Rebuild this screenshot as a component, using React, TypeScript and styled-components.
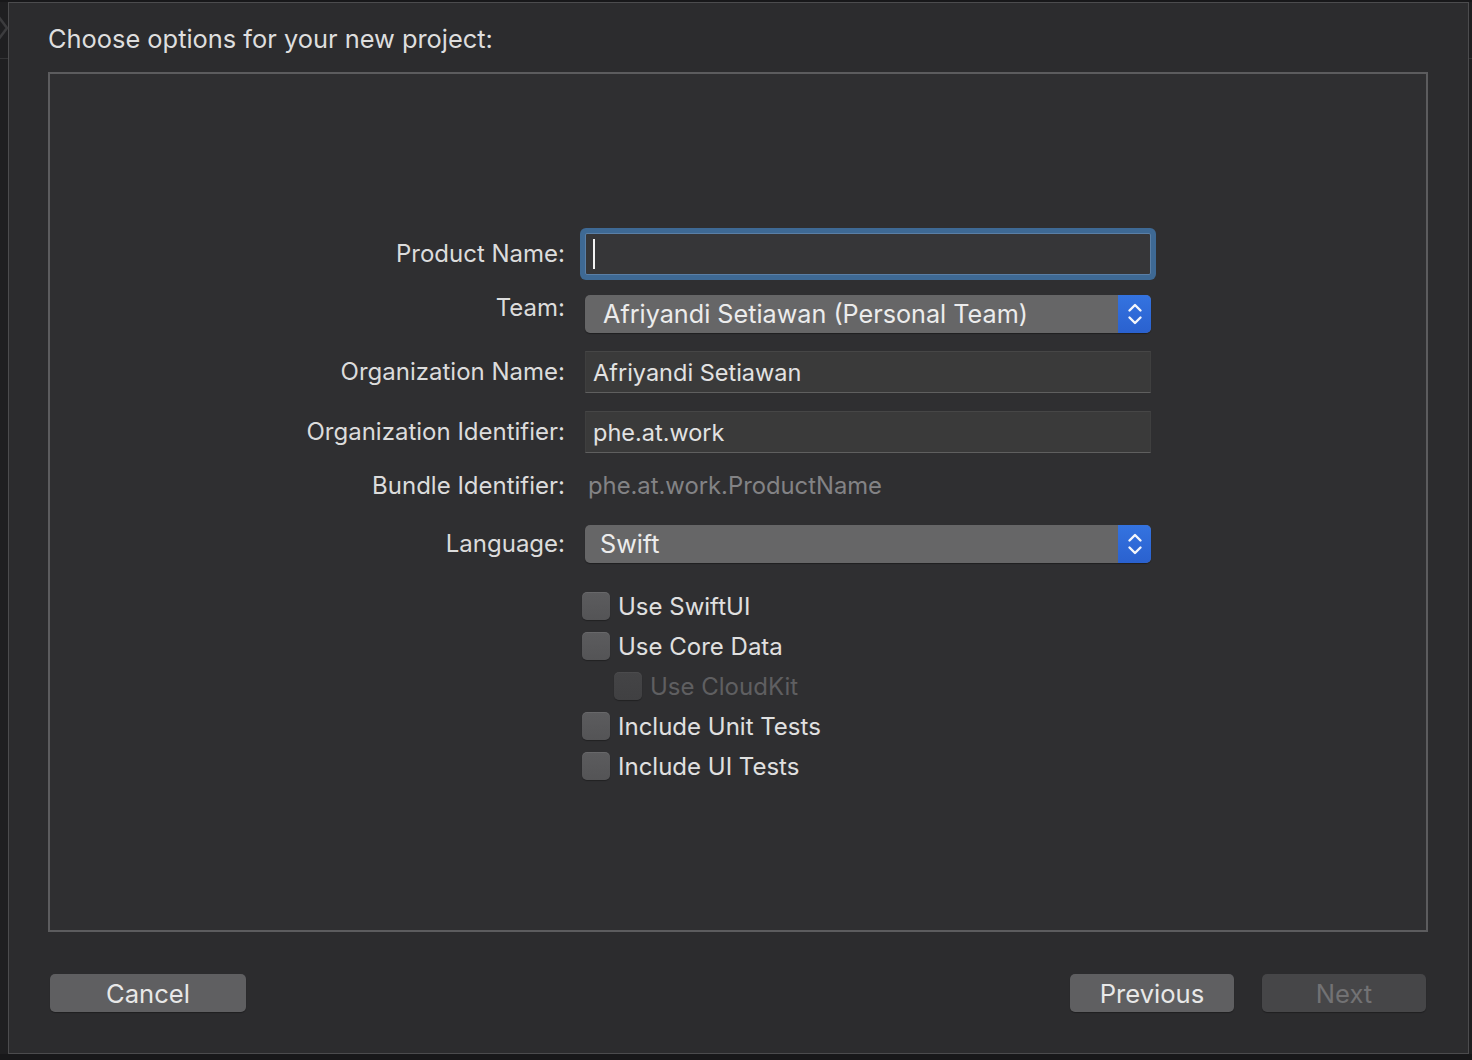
import styled, { createGlobalStyle } from "styled-components"

const GlobalStyle = createGlobalStyle`
  html, body {
    margin: 0;
    padding: 0;
    background: #171719;
  }
  body {
    font-family: Inter, "Liberation Sans", "DejaVu Sans", sans-serif;
    -webkit-font-smoothing: antialiased;
  }
`

const Screen = styled.div`
  display: flex;
  align-items: flex-start;
  width: 1472px;
  height: 1060px;
  padding-top: 2px;
  box-sizing: border-box;
  background: #18181a;
  overflow: hidden;
`

const Strip = styled.div<{ $w: number }>`
  position: relative;
  width: ${(p) => p.$w}px;
  height: 1052px;
  background: #1f1f21;
  flex-shrink: 0;

  &::after {
    content: "";
    position: absolute;
    left: 0;
    right: 0;
    top: 56px;
    height: 1px;
    background: #343436;
  }
`

const Chevron = styled.svg`
  position: absolute;
  left: -4px;
  top: 12px;
`

const Window = styled.div`
  width: 1461px;
  height: 1052px;
  box-sizing: border-box;
  border: 1px solid #4c4c4e;
  background: #2c2c2e;
  display: flex;
  flex-direction: column;
  padding: 18px 40px 0 39px;
  flex-shrink: 0;
`

const Title = styled.div`
  font-size: 25.4px;
  line-height: 35px;
  color: #dedede;
`

const Box = styled.div`
  margin-top: 16px;
  height: 860px;
  box-sizing: border-box;
  border: 2px solid #5c5c5e;
  background: #2f2f31;
  padding-top: 159px;
  display: flex;
  flex-direction: column;
`

const Row = styled.div<{ $gap?: number }>`
  display: grid;
  grid-template-columns: 515px 566px;
  column-gap: 20px;
  align-items: center;
  margin-top: ${(p) => p.$gap ?? 0}px;
`

const Label = styled.div<{ $raise?: boolean }>`
  justify-self: end;
  font-size: 24px;
  line-height: 30px;
  color: #dcdcdc;
  white-space: nowrap;
  align-self: ${(p) => (p.$raise ? "start" : "center")};
  margin-top: ${(p) => (p.$raise ? "-2px" : "0")};
`

const Field = styled.div<{ $focused?: boolean }>`
  height: 42px;
  box-sizing: border-box;
  display: flex;
  align-items: center;
  padding-left: 7px;
  font-size: 23.5px;
  color: #e2e2e2;
  background: ${(p) => (p.$focused ? "#363638" : "#3a3a3a")};
  border-top: 1px solid ${(p) => (p.$focused ? "#5a7fa6" : "#464646")};
  border-bottom: 1px solid ${(p) => (p.$focused ? "#5a7fa6" : "#5f5f5f")};
  border-left: 1px solid ${(p) => (p.$focused ? "#5a7fa6" : "#3f3f3f")};
  border-right: 1px solid ${(p) => (p.$focused ? "#5a7fa6" : "#3f3f3f")};
  border-radius: ${(p) => (p.$focused ? "2px" : "0")};
  box-shadow: ${(p) => (p.$focused ? "0 0 0 5px #3e6994" : "none")};
`

const Caret = styled.span`
  display: block;
  width: 2px;
  height: 30px;
  background: #f2f2f2;
`

const Plain = styled.div`
  font-size: 23.8px;
  line-height: 30px;
  color: #838385;
  padding-left: 3px;
`

const Popup = styled.div`
  height: 38px;
  display: flex;
  align-items: stretch;
  border-radius: 5px;
  background: #666667;
  box-shadow: 0 1px 1px rgba(0, 0, 0, 0.35);
  overflow: hidden;
`

const PopupText = styled.div<{ $pad: number }>`
  flex: 1;
  display: flex;
  align-items: center;
  padding-left: ${(p) => p.$pad}px;
  font-size: 25.2px;
  color: #ececec;
  white-space: nowrap;
`

const Stepper = styled.div`
  width: 33px;
  display: flex;
  align-items: center;
  justify-content: center;
  background: linear-gradient(#3473e0, #2a61cf);
`

const Checks = styled.div`
  display: flex;
  flex-direction: column;
  gap: 12px;
  margin-top: 29px;
  padding-left: 532px;
`

const CheckRow = styled.div<{ $indent?: boolean; $disabled?: boolean }>`
  display: flex;
  align-items: center;
  gap: 8px;
  height: 28px;
  padding-left: ${(p) => (p.$indent ? 32 : 0)}px;
  font-size: 24px;
  color: ${(p) => (p.$disabled ? "#5f5f61" : "#e0e0e0")};
`

const CheckBox = styled.span<{ $disabled?: boolean }>`
  width: 28px;
  height: 28px;
  box-sizing: border-box;
  border-radius: 5px;
  background: ${(p) =>
    p.$disabled
      ? "linear-gradient(#444446, #404042)"
      : "linear-gradient(#5c5c5e, #545456)"};
  box-shadow: inset 0 1px 0 rgba(255, 255, 255, ${(p) => (p.$disabled ? 0.04 : 0.08)}),
    0 1px 1px rgba(0, 0, 0, 0.3);
`

const Footer = styled.div`
  display: flex;
  align-items: center;
  margin-top: 42px;
  padding: 0 2px;
`

const Button = styled.div<{ $w: number; $disabled?: boolean }>`
  width: ${(p) => p.$w}px;
  height: 38px;
  border-radius: 5px;
  display: flex;
  align-items: center;
  justify-content: center;
  font-size: 25.6px;
  color: ${(p) => (p.$disabled ? "#727274" : "#e8e8e8")};
  background: ${(p) => (p.$disabled ? "#464648" : "#5f5f61")};
  box-shadow: 0 1px 1px rgba(0, 0, 0, 0.3);
`

const Spacer = styled.div`
  flex: 1;
`

const NextSlot = styled.div`
  margin-left: 28px;
`

function StepperIcon() {
  return (
    <Stepper>
      <svg width="16" height="28" viewBox="0 0 16 28" fill="none">
        <path d="M2.5 10.5 L8 5 L13.5 10.5" stroke="#f4f6fb" strokeWidth="2.4" strokeLinecap="round" strokeLinejoin="round" />
        <path d="M2.5 17.5 L8 23 L13.5 17.5" stroke="#f4f6fb" strokeWidth="2.4" strokeLinecap="round" strokeLinejoin="round" />
      </svg>
    </Stepper>
  )
}

const options = [
  { label: "Use SwiftUI" },
  { label: "Use Core Data" },
  { label: "Use CloudKit", indent: true, disabled: true },
  { label: "Include Unit Tests" },
  { label: "Include UI Tests" },
]

export default function App() {
  return (
    <>
      <GlobalStyle />
      <Screen>
        <Strip $w={8}>
          <Chevron width="14" height="28" viewBox="0 0 14 28">
            <path d="M2 2 L11 14 L2 26" stroke="#3c3c3e" strokeWidth="2.5" fill="none" />
          </Chevron>
        </Strip>
        <Window>
          <Title>Choose options for your new project:</Title>
          <Box>
            <Row>
              <Label>Product Name:</Label>
              <Field $focused>
                <Caret />
              </Field>
            </Row>
            <Row $gap={20}>
              <Label $raise>Team:</Label>
              <Popup>
                <PopupText $pad={18}>Afriyandi Setiawan (Personal Team)</PopupText>
                <StepperIcon />
              </Popup>
            </Row>
            <Row $gap={18}>
              <Label>Organization Name:</Label>
              <Field>Afriyandi Setiawan</Field>
            </Row>
            <Row $gap={18}>
              <Label>Organization Identifier:</Label>
              <Field>phe.at.work</Field>
            </Row>
            <Row $gap={18}>
              <Label>Bundle Identifier:</Label>
              <Plain>phe.at.work.ProductName</Plain>
            </Row>
            <Row $gap={24}>
              <Label>Language:</Label>
              <Popup>
                <PopupText $pad={15}>Swift</PopupText>
                <StepperIcon />
              </Popup>
            </Row>
            <Checks>
              {options.map((o) => (
                <CheckRow key={o.label} $indent={o.indent} $disabled={o.disabled}>
                  <CheckBox $disabled={o.disabled} />
                  {o.label}
                </CheckRow>
              ))}
            </Checks>
          </Box>
          <Footer>
            <Button $w={196}>Cancel</Button>
            <Spacer />
            <Button $w={164}>Previous</Button>
            <NextSlot>
              <Button $w={164} $disabled>
                Next
              </Button>
            </NextSlot>
          </Footer>
        </Window>
        <Strip $w={3} />
      </Screen>
    </>
  )
}
